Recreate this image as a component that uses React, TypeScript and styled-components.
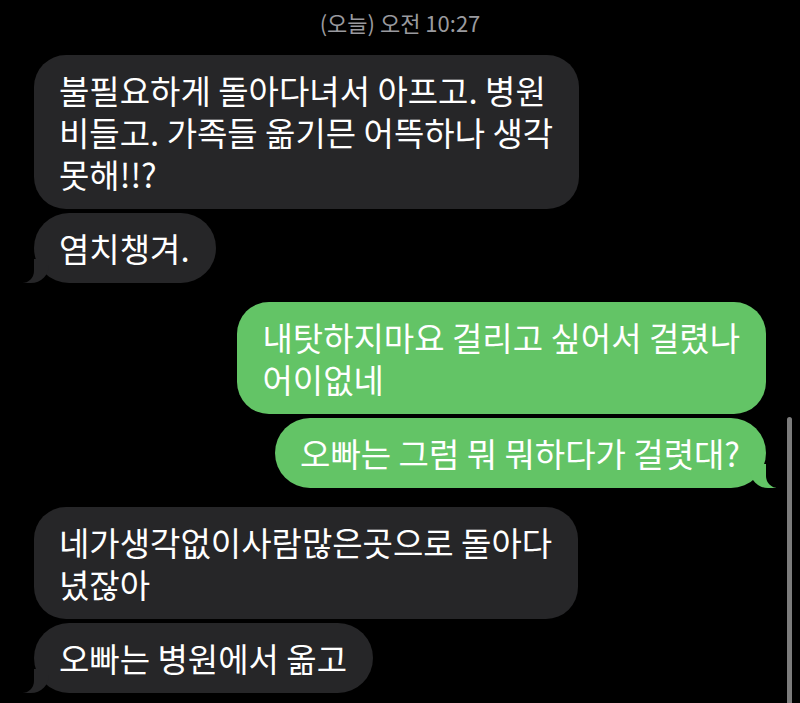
import React from "react";
import styled, { createGlobalStyle, css } from "styled-components";

const Global = createGlobalStyle`
  html, body { margin: 0; padding: 0; background: #000; }
  body { font-family: "Noto Sans CJK KR", "Noto Sans", sans-serif; }
  #root { background: #000; }
`;

const Screen = styled.div`
  position: relative;
  width: 800px;
  height: 703px;
  overflow: hidden;
  background: #000;
  display: flex;
  flex-direction: column;
  padding: 9px 34px 0 34px;
  box-sizing: border-box;
`;

const Stamp = styled.div`
  text-align: center;
  color: #9a9a9f;
  font-size: 22px;
  line-height: 26px;
  margin-bottom: 20px;
`;

const Thread = styled.div`
  display: flex;
  flex-direction: column;
  gap: 19px;
`;

const Group = styled.div<{ $mine?: boolean }>`
  display: flex;
  flex-direction: column;
  gap: 4px;
  align-items: ${(p) => (p.$mine ? "flex-end" : "flex-start")};
`;

const Bubble = styled.div<{ $mine?: boolean; $tail?: boolean; $multi?: boolean }>`
  position: relative;
  box-sizing: border-box;
  padding: 14px 26px 14px 25px;
  border-radius: ${(p) => (p.$multi ? "32px" : "35px")};
  background: ${(p) => (p.$mine ? "#63c466" : "#262628")};
  color: #fff;
  font-size: 33px;
  line-height: 42px;
  white-space: nowrap;

  ${(p) =>
    p.$tail &&
    !p.$mine &&
    css`
      &::before {
        content: "";
        position: absolute;
        bottom: 0;
        left: -11px;
        width: 26px;
        height: 24px;
        background: #262628;
        border-bottom-right-radius: 18px;
      }
      &::after {
        content: "";
        position: absolute;
        bottom: 0;
        left: -16px;
        width: 16px;
        height: 26px;
        background: #000;
        border-bottom-right-radius: 12px;
      }
    `}

  ${(p) =>
    p.$tail &&
    p.$mine &&
    css`
      &::before {
        content: "";
        position: absolute;
        bottom: 0;
        right: -10px;
        width: 26px;
        height: 24px;
        background: #63c466;
        border-bottom-left-radius: 18px;
      }
      &::after {
        content: "";
        position: absolute;
        bottom: 0;
        right: -15px;
        width: 15px;
        height: 26px;
        background: #000;
        border-bottom-left-radius: 12px;
      }
    `}
`;

const Text = styled.span`
  position: relative;
  z-index: 1;
`;

const ScrollBar = styled.div`
  position: absolute;
  right: 8px;
  top: 417px;
  width: 5px;
  height: 300px;
  border-radius: 3px;
  background: #7c7c7c;
`;

type Msg = { lines: string[]; tail?: boolean };
type G = { mine?: boolean; msgs: Msg[] };

const data: G[] = [
  {
    msgs: [
      {
        lines: [
          "불필요하게 돌아다녀서 아프고. 병원",
          "비들고. 가족들 옮기믄 어뜩하나 생각",
          "못해!!?",
        ],
      },
      { lines: ["염치챙겨."], tail: true },
    ],
  },
  {
    mine: true,
    msgs: [
      { lines: ["내탓하지마요 걸리고 싶어서 걸렸나", "어이없네"] },
      { lines: ["오빠는 그럼 뭐 뭐하다가 걸렷대?"], tail: true },
    ],
  },
  {
    msgs: [
      { lines: ["네가생각없이사람많은곳으로 돌아다", "녔잖아"] },
      { lines: ["오빠는 병원에서 옮고"], tail: true },
    ],
  },
];

export default function App() {
  return (
    <>
      <Global />
      <Screen>
        <Stamp>(오늘) 오전 10:27</Stamp>
        <Thread>
          {data.map((g, gi) => (
            <Group key={gi} $mine={g.mine}>
              {g.msgs.map((m, mi) => (
                <Bubble key={mi} $mine={g.mine} $tail={m.tail} $multi={m.lines.length > 1}>
                  <Text>
                    {m.lines.map((l, li) => (
                      <React.Fragment key={li}>
                        {li > 0 && <br />}
                        {l}
                      </React.Fragment>
                    ))}
                  </Text>
                </Bubble>
              ))}
            </Group>
          ))}
        </Thread>
        <ScrollBar />
      </Screen>
    </>
  );
}
